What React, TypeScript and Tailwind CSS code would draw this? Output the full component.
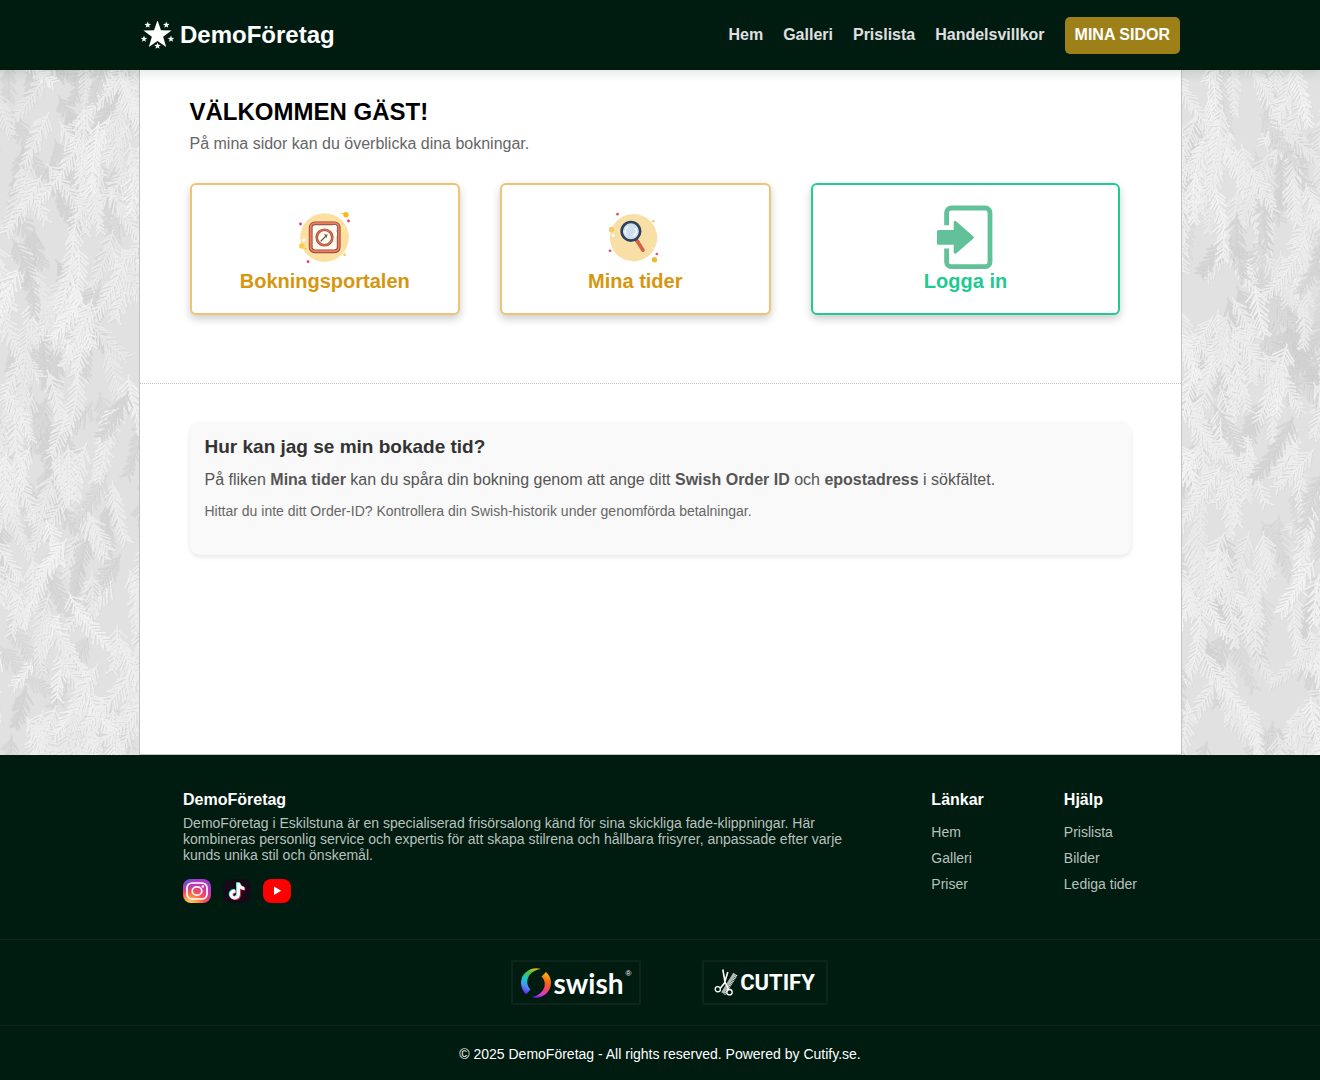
import React from "react";

const navLinks = ["Hem", "Galleri", "Prislista", "Handelsvillkor"];

const footerColumns = [
  { title: "Länkar", links: ["Hem", "Galleri", "Priser"] },
  { title: "Hjälp", links: ["Prislista", "Bilder", "Lediga tider"] },
];

// small seeded generator so that the branches look the same on every render
function createRandom(seed: number) {
  let state = seed;
  return () => {
    state = (state * 1664525 + 1013904223) % 4294967296;
    return state / 4294967296;
  };
}

type Branch = { needles: string; tone: string; shade: string };

function growBranches(seed: number): Branch[] {
  const random = createRandom(seed);
  const lightTones = ["#f1f1f1", "#eeeeee", "#f4f4f4", "#ebebeb", "#f0f0f0"];
  const darkTones = ["#d2d2d2", "#d6d6d6", "#dadada"];
  const branches: Branch[] = [];

  for (let i = 0; i < 230; i++) {
    const dark = i < 50 || random() < 0.12;
    let x = random() * 170 - 15;
    let y = random() * 740 - 60;
    let angle = Math.PI / 2 + (random() - 0.5) * 1.3;
    const bend = (random() - 0.5) * 0.06;
    const steps = 10 + Math.floor(random() * 12);
    let needles = "";
    for (let s = 0; s < steps; s++) {
      const nx = x + Math.cos(angle) * 4;
      const ny = y + Math.sin(angle) * 4;
      needles += `M${x.toFixed(1)} ${y.toFixed(1)}L${nx.toFixed(1)} ${ny.toFixed(1)}`;
      const size = (14 - (s / steps) * 7) * (0.7 + random() * 0.5);
      for (const side of [-1, 1]) {
        const a = angle + side * (0.5 + random() * 0.4);
        const tx = nx + Math.cos(a) * size;
        const ty = ny + Math.sin(a) * size;
        needles += `M${nx.toFixed(1)} ${ny.toFixed(1)}L${tx.toFixed(1)} ${ty.toFixed(1)}`;
      }
      x = nx;
      y = ny;
      angle += bend;
    }
    const tones = dark ? darkTones : lightTones;
    branches.push({
      needles,
      tone: tones[Math.floor(random() * tones.length)],
      shade: dark ? "#c2c2c2" : "#d0d0d0",
    });
  }
  return branches;
}

const leftBranches = growBranches(7);
const rightBranches = growBranches(91);

const FirBackdrop = ({ branches }: { branches: Branch[] }) => {
  return (
    <div className="relative min-w-0 flex-1 overflow-hidden bg-[#e1e1e1]">
      <svg
        aria-hidden="true"
        className="absolute inset-0 h-full w-full"
        viewBox="0 0 139 685"
        preserveAspectRatio="xMidYMid slice"
      >
        {branches.map((branch, i) => (
          <g key={i} fill="none" strokeLinecap="round">
            <path
              d={branch.needles}
              stroke={branch.shade}
              strokeOpacity="0.55"
              strokeWidth="1"
              transform="translate(1 1)"
            />
            <path
              d={branch.needles}
              stroke={branch.tone}
              strokeOpacity="0.85"
              strokeWidth="1.6"
            />
          </g>
        ))}
      </svg>
    </div>
  );
};

const STAR =
  "M0 -10L2.35 -3.24L9.51 -3.09L3.8 1.24L5.88 8.09L0 4L-5.88 8.09L-3.8 1.24L-9.51 -3.09L-2.35 -3.24Z";

const StarsLogo = () => (
  <svg aria-hidden="true" className="h-7 w-[34px]" viewBox="0 0 34 28" fill="#fff">
    <path d={STAR} transform="translate(17.5 14) scale(1.48)" />
    <path d={STAR} transform="translate(7.7 4) scale(.35)" />
    <path d={STAR} transform="translate(26.3 4) scale(.35)" />
    <path d={STAR} transform="translate(4 18) scale(.35)" />
    <path d={STAR} transform="translate(31 18) scale(.35)" />
    <path d={STAR} transform="translate(17.5 25) scale(.35)" />
  </svg>
);

const ClockIcon = () => (
  <svg aria-hidden="true" className="h-16 w-16" viewBox="0 0 64 64" fill="none">
    <circle cx="31.5" cy="32.5" r="24.3" fill="#fddf9f" />
    <circle cx="53" cy="9.8" r="2.7" fill="#f4bc14" />
    <path d="M48.5 8.5h2" stroke="#f4bc14" />
    <circle cx="55.5" cy="16" r="1.4" fill="#f0355b" />
    <circle cx="7.5" cy="19" r="1.4" fill="#f0355b" />
    <circle cx="15" cy="56.7" r="1.4" fill="#f0355b" />
    <circle cx="51.6" cy="49.8" r="1.4" fill="#fccb4c" />
    <circle cx="8.8" cy="41" r="2.7" fill="#fccb4c" />
    <circle cx="12.6" cy="43.6" r=".8" fill="#f4bc14" />
    <circle cx="11" cy="35" r="1.8" fill="#fff" />
    <circle cx="51" cy="22.5" r="1" fill="#fff2d2" />
    <rect x="17.7" y="18.3" width="28" height="28" rx="4" fill="#fdfcee" stroke="#8a4b41" strokeWidth="3.8" />
    <rect x="17.7" y="18.3" width="28" height="28" rx="4" stroke="#ee7d60" strokeWidth="1.9" />
    <path d="M39.5 20.5h2.5q1.5 0 1.5 1.5v2.5M43.5 27v4" stroke="#fff" strokeWidth="1" />
    <circle cx="31.5" cy="32.5" r="7.8" fill="#fdfcee" stroke="#8a4b41" strokeWidth="2.6" />
    <circle cx="31.5" cy="32.5" r="7.8" stroke="#ee6f52" strokeWidth="1.2" />
    <path d="M28 36L34 30M32 29.5L33.5 32" stroke="#6b5a55" strokeWidth="1.2" strokeLinecap="round" />
  </svg>
);

const SearchIcon = () => (
  <svg aria-hidden="true" className="h-16 w-16" viewBox="0 0 64 64" fill="none">
    <circle cx="30.5" cy="32.7" r="23.7" fill="#f8dfa5" />
    <circle cx="14.5" cy="9.2" r="1.4" fill="#de5465" />
    <circle cx="50.2" cy="16.3" r="1.3" fill="#f0c860" />
    <circle cx="8.5" cy="24.5" r="2.7" fill="#f3ca68" />
    <circle cx="10.3" cy="30.5" r="1.7" fill="#fff8e6" />
    <circle cx="49.5" cy="43" r=".9" fill="#fff2d2" />
    <circle cx="7" cy="45.8" r="1.4" fill="#de5465" />
    <circle cx="53.8" cy="49" r="1.3" fill="#de5465" />
    <circle cx="51.5" cy="54.8" r="2.7" fill="#ecbb3c" />
    <path d="M32.5 34l3 4" stroke="#2c3d58" strokeWidth="3" />
    <path d="M34.500 36.500l5.500 8.700" stroke="#d95f45" strokeWidth="3.600" strokeLinecap="round" />
    <circle cx="27.900" cy="26.300" r="9.300" fill="#cfdfed" stroke="#2f405c" strokeWidth="2.600" />
    <path
      d="M23 29.500a5.600 5.600 0 0 1 1.700-7.500M32.500 23.700a5.600 5.600 0 0 1-1.800 7.200"
      stroke="#fff"
      strokeWidth="1.400"
      strokeLinecap="round"
    />
  </svg>
);

const LoginIcon = () => (
  <svg aria-hidden="true" className="h-16 w-16" viewBox="0 0 64 64" fill="none">
    <path
      d="M13.600 20.300V7.700a4.700 4.700 0 0 1 4.700-4.700h34a4.700 4.700 0 0 1 4.700 4.700v49.200a4.700 4.700 0 0 1-4.700 4.700h-34a4.700 4.700 0 0 1-4.700-4.700V43.600"
      stroke="#62c198"
      strokeWidth="4.800"
    />
    <path
      d="M4 26.500a1.500 1.500 0 0 1 1.500-1.500H20.700V17.500a1.500 1.500 0 0 1 2.700-1l17 15a1.400 1.400 0 0 1 0 2l-17 14.800a1.600 1.600 0 0 1-2.700-1V39.800H5.500a1.500 1.500 0 0 1-1.500-1.500z"
      fill="#62c198"
    />
  </svg>
);

const InstagramIcon = () => (
  <svg aria-hidden="true" className="h-6 w-7" viewBox="0 0 28 24" fill="none">
    <defs>
      <radialGradient id="ig-warm" cx=".25" cy="1.05" r="1.05">
        <stop offset="0" stopColor="#ffdc58" />
        <stop offset=".25" stopColor="#ffa048" />
        <stop offset=".5" stopColor="#f8504f" />
        <stop offset=".8" stopColor="#cb36ac" />
        <stop offset="1" stopColor="#a63bc8" />
      </radialGradient>
      <radialGradient id="ig-cold" cx="0" cy="0" r=".6">
        <stop offset="0" stopColor="#4a5fe0" />
        <stop offset="1" stopColor="#7a40e0" stopOpacity="0" />
      </radialGradient>
    </defs>
    <rect width="28" height="24" rx="8" fill="url(#ig-warm)" />
    <rect width="28" height="24" rx="8" fill="url(#ig-cold)" />
    <rect x="4" y="4" width="20" height="16" rx="5" stroke="#fff" strokeWidth="1.700" />
    <ellipse cx="14" cy="12" rx="4.800" ry="4.200" stroke="#fff" strokeWidth="1.700" />
    <circle cx="19.800" cy="7.500" r="1.200" fill="#fff" />
  </svg>
);

const NOTE =
  "M13.500 4h3.200c.2 2.300 1.900 3.900 4.300 4.100v3c-1.700 0-3.100-.5-4.300-1.300v5.700c0 3.100-2.500 5.200-5.400 5.200s-5.100-2.100-5.100-4.900c0-3 2.500-5.200 5.900-4.900v3.100c-1.500-.3-2.800.5-2.800 1.800 0 1.100.9 1.900 2 1.900 1.300 0 2.200-.9 2.200-2.300z";

const TikTokIcon = () => (
  <svg aria-hidden="true" className="h-6 w-7" viewBox="0 0 28 24">
    <rect width="28" height="24" rx="8" fill="#150a18" />
    <g transform="translate(.3 -.2)">
      <path d={NOTE} fill="#2af0ea" transform="translate(-.7 -.6)" />
      <path d={NOTE} fill="#fb2c55" transform="translate(.9 .6)" />
      <path d={NOTE} fill="#fff" />
    </g>
  </svg>
);

const YoutubeIcon = () => (
  <svg aria-hidden="true" className="h-6 w-7" viewBox="0 0 28 24">
    <rect width="28" height="24" rx="8" fill="#f00" />
    <path d="M11 7.500v8.500l7.200-4.250z" fill="#fff" />
  </svg>
);

const SwishMark = () => (
  <svg aria-hidden="true" className="h-8 w-8" viewBox="0 0 32 32" fill="none">
    <defs>
      <linearGradient id="swish-left" x1="18" y1="2" x2="6" y2="27" gradientUnits="userSpaceOnUse">
        <stop offset="0" stopColor="#e8b91a" />
        <stop offset=".25" stopColor="#4fc23c" />
        <stop offset=".5" stopColor="#1cc6c6" />
        <stop offset=".75" stopColor="#4b93f5" />
        <stop offset="1" stopColor="#6a1df0" />
      </linearGradient>
      <linearGradient id="swish-right" x1="26" y1="5" x2="14" y2="31" gradientUnits="userSpaceOnUse">
        <stop offset="0" stopColor="#f9b80a" />
        <stop offset=".35" stopColor="#f4601f" />
        <stop offset=".6" stopColor="#ef3f7a" />
        <stop offset=".8" stopColor="#c93be0" />
        <stop offset="1" stopColor="#5a1de8" />
      </linearGradient>
    </defs>
    <path d="M21 2C11-1 1 6 1 16c0 4.500 2 8.500 5 11.500l4.500-5C3.500 16 8 3.500 21 2z" fill="url(#swish-left)" />
    <path d="M11 30c10 3 20-4 20-14 0-4.500-2-8.500-5-11l-4.500 4.500C28.500 16 24 28.500 11 30z" fill="url(#swish-right)" />
  </svg>
);

const ScissorsMark = () => (
  <svg aria-hidden="true" className="h-7 w-6" viewBox="0 0 24 28" fill="none" stroke="#fff">
    <path d="M20.500 4.500L8.500 24" strokeWidth="3" stroke="#aeb9b3" />
    <path d="M22.500 6L10.500 25.500" strokeWidth="2.200" strokeDasharray="1 .7" />
    <path d="M8.800 0.500L11 13l3.800 8M13.800 3L10.500 14l-4.500 5.500" strokeWidth="1.600" />
    <circle cx="3.800" cy="20.200" r="2.600" strokeWidth="1.300" />
    <circle cx="15.500" cy="23.200" r="2.700" strokeWidth="1.300" />
  </svg>
);

const ActionCard = ({
  label,
  icon,
  className,
}: {
  label: string;
  icon: React.ReactNode;
  className: string;
}) => {
  return (
    <a
      href="#"
      className={`flex h-[132px] flex-col items-center rounded-md border-2 bg-white pt-5 text-xl leading-6 font-bold shadow-[0_4px_8px_rgba(0,0,0,0.2)] ${className}`}
    >
      {icon}
      <span>{label}</span>
    </a>
  );
};

const Header = () => {
  return (
    <header className="relative z-10 bg-[#001b10] px-4 shadow-[0_4px_10px_rgba(0,0,0,0.1)]">
      <div className="mx-auto flex h-[70px] max-w-[1040px] items-center justify-between">
        <a href="#" className="flex items-center gap-[6px] text-2xl font-bold text-white">
          <StarsLogo />
          DemoFöretag
        </a>
        <nav className="flex items-center gap-5 text-base font-bold text-[#e0e0e0]">
          {navLinks.map((link) => (
            <a key={link} href="#">
              {link}
            </a>
          ))}
          <a
            href="#"
            className="flex h-[37px] items-center rounded-[5px] bg-[#9e8019] px-[10px] text-white"
          >
            MINA SIDOR
          </a>
        </nav>
      </div>
    </header>
  );
};

const Footer = () => {
  return (
    <footer className="bg-[#001b10] text-sm text-[#b9c2bd]">
      <div className="mx-auto flex h-[184px] max-w-[954px] justify-between pt-9">
        <div className="max-w-[670px]">
          <h3 className="text-base leading-[18px] font-bold text-white">DemoFöretag</h3>
          <p className="mt-[6px] leading-4">
            DemoFöretag i Eskilstuna är en specialiserad frisörsalong känd för sina skickliga
            fade-klippningar. Här kombineras personlig service och expertis för att skapa
            stilrena och hållbara frisyrer, anpassade efter varje kunds unika stil och önskemål.
          </p>
          <div className="mt-4 flex gap-3">
            <a href="#" aria-label="Instagram">
              <InstagramIcon />
            </a>
            <a href="#" aria-label="TikTok">
              <TikTokIcon />
            </a>
            <a href="#" aria-label="YouTube">
              <YoutubeIcon />
            </a>
          </div>
        </div>
        <div className="flex gap-20">
          {footerColumns.map((column) => (
            <div key={column.title}>
              <h3 className="text-base leading-[18px] font-bold text-white">{column.title}</h3>
              <ul className="mt-[10px] leading-[26px]">
                {column.links.map((link) => (
                  <li key={link}>
                    <a href="#">{link}</a>
                  </li>
                ))}
              </ul>
            </div>
          ))}
        </div>
      </div>
      <div className="flex h-[87px] items-center justify-center gap-[61px] border-y border-[#0c261b] pl-[18px]">
        <a
          href="#"
          className="flex h-[45px] w-[130px] items-center justify-center gap-[2px] rounded-xs border-2 border-[#0c261b] text-white"
        >
          <SwishMark />
          <span className="font-['Lato',sans-serif] text-[28px] leading-8 font-bold">swish</span>
          <span className="self-start pt-1 text-[8px] leading-4">®</span>
        </a>
        <a
          href="#"
          className="flex h-[45px] w-[126px] items-center justify-center gap-[2px] rounded-xs border-2 border-[#0c261b] text-white"
        >
          <ScissorsMark />
          <span className="font-['Roboto',sans-serif] text-[22px] leading-8 font-bold">
            CUTIFY
          </span>
        </a>
      </div>
      <p className="py-5 text-center leading-4 text-white">
        © 2025 DemoFöretag - All rights reserved. Powered by Cutify.se.
      </p>
    </footer>
  );
};

export default function App() {
  return (
    <div className="bg-[#001b10] font-['Liberation_Sans',Arial,sans-serif]">
      <Header />
      <div className="flex">
        <FirBackdrop branches={leftBranches} />
        <main className="min-h-[685px] w-full max-w-[1043px] border-x border-b border-[#c4c4c4] bg-white">
          <section className="border-b border-dotted border-[#c4c4c4] px-[50px] pt-7 pb-[68px]">
            <h1 className="text-2xl leading-7 font-bold text-black">VÄLKOMMEN GÄST!</h1>
            <p className="mt-[6px] text-base text-[#666]">
              På mina sidor kan du överblicka dina bokningar.
            </p>
            <div className="mt-[27px] mr-[10px] flex gap-10">
              <ActionCard
                label="Bokningsportalen"
                icon={<ClockIcon />}
                className="flex-[27] border-[#f0c475] text-[#d6960f]"
              />
              <ActionCard
                label="Mina tider"
                icon={<SearchIcon />}
                className="flex-[27] border-[#f0c475] text-[#d6960f]"
              />
              <ActionCard
                label="Logga in"
                icon={<LoginIcon />}
                className="flex-[31] border-[#22c993] text-[#22c993]"
              />
            </div>
          </section>
          <section className="mx-[50px] mt-[38px] h-[133px] rounded-[10px] bg-[#f9f9f9] px-[15px] pt-[13px] shadow-[0_2px_5px_rgba(0,0,0,0.1)]">
            <h2 className="text-[19px] leading-6 font-bold text-[#333]">
              Hur kan jag se min bokade tid?
            </h2>
            <p className="mt-[9px] text-base text-[#555]">
              På fliken <strong>Mina tider</strong> kan du spåra din bokning genom att ange ditt{" "}
              <strong>Swish Order ID</strong> och <strong>epostadress</strong> i sökfältet.
            </p>
            <p className="mt-[9px] text-sm text-[#666]">
              Hittar du inte ditt Order-ID? Kontrollera din Swish-historik under genomförda
              betalningar.
            </p>
          </section>
        </main>
        <FirBackdrop branches={rightBranches} />
      </div>
      <Footer />
    </div>
  );
}
